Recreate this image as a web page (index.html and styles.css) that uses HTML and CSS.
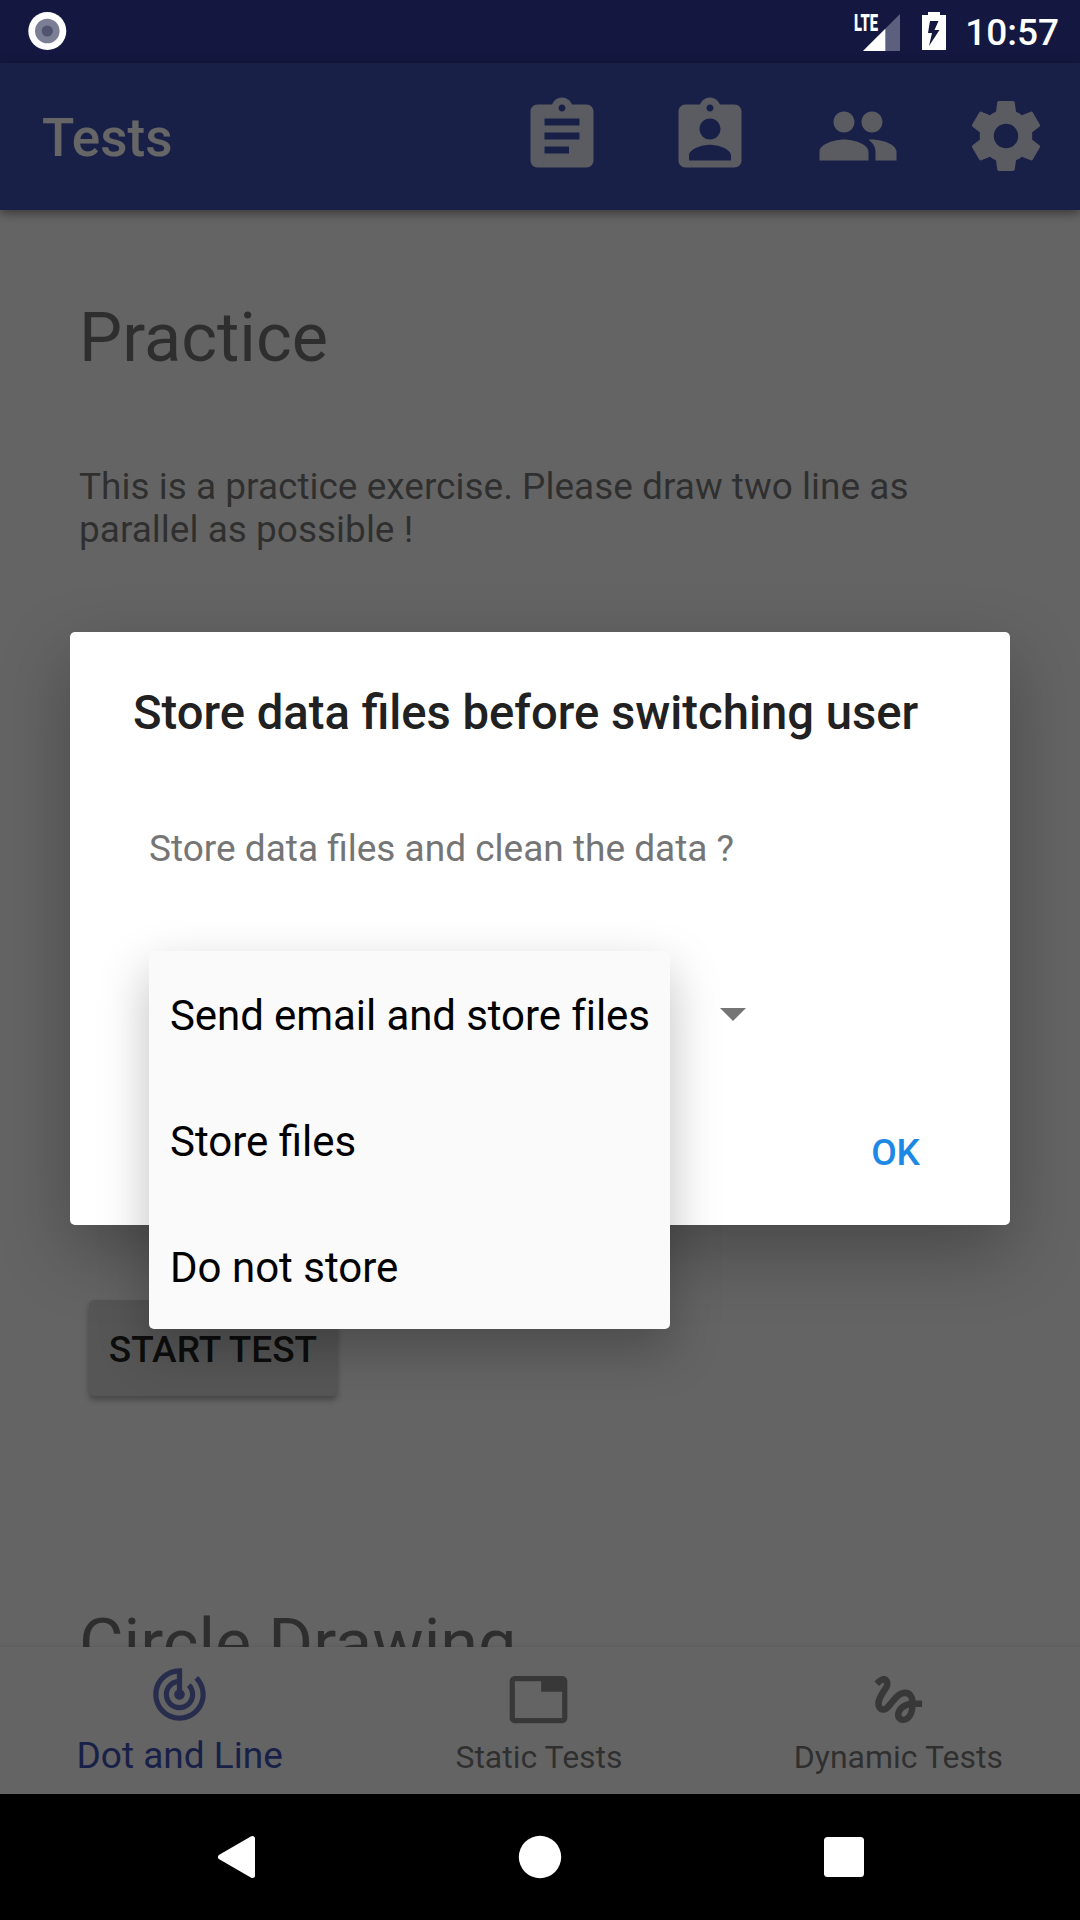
FILE: index.html
```html
<!DOCTYPE html>
<html lang="en">
<head>
<meta charset="utf-8">
<title>Tests</title>
<link rel="stylesheet" href="styles.css">
</head>
<body>
<div class="screen">
  <header class="status-bar">
    <svg class="status-record" width="40" height="40" viewBox="0 0 40 40"><circle cx="20.300" cy="20" r="19" fill="#fff"/><circle cx="20.300" cy="20" r="12.3" fill="#7c7e96"/><circle cx="20.300" cy="20" r="5.6" fill="#51546f"/></svg>
    <div class="status-icons">
      <svg class="signal" width="48" height="40" viewBox="0 0 48 40"><path d="M46 2v37H9z" fill="#5d5f7e"/><path d="M31.3 16.7V39H9z" fill="#fff"/><path d="M0 0h26v18H0z" fill="#141840"/><text x="0" y="18.7" textLength="24" lengthAdjust="spacingAndGlyphs" class="lte">LTE</text></svg>
      <svg class="battery" width="24" height="38" viewBox="0 0 24 38"><path fill="#fff" fill-rule="evenodd" d="M6 0h12v3H24v35H0V3h6zM8 9L6 21h4L7 34l10.500-16H12.500L16.500 9z"/></svg>
      <span class="clock">10:57</span>
    </div>
  </header>

  <div class="app">
    <div class="toolbar">
      <h1 class="toolbar-title">Tests</h1>
      <div class="toolbar-actions">
        <svg class="action" viewBox="0 0 24 24"><path d="M19 3h-4.180C14.400 1.840 13.300 1 12 1c-1.300 0-2.400.84-2.820 2H5c-1.100 0-2 .9-2 2v14c0 1.100.9 2 2 2h14c1.100 0 2-.9 2-2V5c0-1.100-.9-2-2-2zm-7 0c.55 0 1 .45 1 1s-.45 1-1 1-1-.45-1-1 .45-1 1-1zm2 14H7v-2h7v2zm3-4H7v-2h10v2zm0-4H7V7h10v2z"/></svg>
        <svg class="action" viewBox="0 0 24 24"><path d="M19 3h-4.180C14.400 1.840 13.300 1 12 1c-1.300 0-2.400.84-2.820 2H5c-1.100 0-2 .9-2 2v14c0 1.100.9 2 2 2h14c1.100 0 2-.9 2-2V5c0-1.100-.9-2-2-2zm-7 0c.55 0 1 .45 1 1s-.45 1-1 1-1-.45-1-1 .45-1 1-1zm0 4c1.660 0 3 1.340 3 3s-1.340 3-3 3-3-1.340-3-3 1.340-3 3-3zm6 12H6v-1.400c0-2 4-3.100 6-3.100s6 1.100 6 3.100V19z"/></svg>
        <svg class="action" viewBox="0 0 24 24"><path d="M16 11c1.660 0 2.990-1.340 2.990-3S17.660 5 16 5c-1.660 0-3 1.340-3 3s1.340 3 3 3zm-8 0c1.660 0 2.990-1.340 2.990-3S9.660 5 8 5C6.340 5 5 6.340 5 8s1.340 3 3 3zm0 2c-2.330 0-7 1.170-7 3.500V19h14v-2.500c0-2.330-4.670-3.500-7-3.500zm8 0c-.29 0-.62.02-.97.05 1.160.84 1.970 1.970 1.970 3.450V19h6v-2.500c0-2.330-4.670-3.500-7-3.500z"/></svg>
        <svg class="action" viewBox="0 0 24 24"><path d="M19.430 12.980c.04-.32.07-.64.07-.98s-.03-.66-.07-.98l2.110-1.650c.19-.15.24-.42.12-.64l-2-3.460c-.12-.22-.39-.3-.61-.22l-2.490 1c-.52-.4-1.080-.73-1.690-.98l-.38-2.650C14.460 2.180 14.250 2 14 2h-4c-.25 0-.46.18-.49.42l-.38 2.650c-.61.25-1.170.59-1.690.98l-2.490-1c-.23-.09-.49 0-.61.22l-2 3.460c-.13.22-.07.49.12.64l2.110 1.650c-.04.32-.07.65-.07.98s.03.66.07.98l-2.110 1.650c-.19.15-.24.42-.12.64l2 3.460c.12.22.39.3.61.22l2.490-1c.52.4 1.080.73 1.690.98l.38 2.650c.03.24.24.42.49.42h4c.25 0 .46-.18.49-.42l.38-2.650c.61-.25 1.170-.59 1.690-.98l2.490 1c.23.09.49 0 .61-.22l2-3.460c.12-.22.07-.49-.12-.64l-2.110-1.650zM12 15.500c-1.930 0-3.500-1.570-3.500-3.500s1.570-3.500 3.500-3.500 3.500 1.570 3.500 3.500-1.570 3.500-3.500 3.500z"/></svg>
      </div>
    </div>

    <main class="content">
      <h2 class="test-name">Practice</h2>
      <p class="test-text">This is a practice exercise. Please draw two line as parallel as possible !</p>
      <button class="start">START TEST</button>
      <h2 class="test-name">Circle Drawing</h2>
    </main>

    <nav class="tabs">
      <div class="tab tab-active">
        <svg class="tab-icon" viewBox="0 0 24 24"><path d="M19.070 4.930l-1.410 1.410C19.100 7.790 20 9.790 20 12c0 4.420-3.580 8-8 8s-8-3.580-8-8c0-4.080 3.050-7.440 7-7.930v2.020C8.160 6.570 6 9.030 6 12c0 3.310 2.690 6 6 6s6-2.690 6-6c0-1.660-.67-3.160-1.760-4.240l-1.410 1.410C15.550 9.900 16 10.900 16 12c0 2.210-1.790 4-4 4s-4-1.790-4-4c0-1.860 1.280-3.410 3-3.860v2.140c-.6.35-1 .98-1 1.720 0 1.100.9 2 2 2s2-.9 2-2c0-.74-.4-1.380-1-1.720V2h-1C6.480 2 2 6.480 2 12s4.480 10 10 10 10-4.480 10-10c0-2.760-1.120-5.260-2.930-7.070z"/></svg>
        <span class="tab-label">Dot and Line</span>
      </div>
      <div class="tab">
        <svg class="tab-icon" viewBox="0 0 24 24"><path d="M21 3H3c-1.100 0-2 .9-2 2v14c0 1.100.9 2 2 2h18c1.100 0 2-.9 2-2V5c0-1.100-.9-2-2-2zm0 16H3V5h10v4h8v10z"/></svg>
        <span class="tab-label">Static Tests</span>
      </div>
      <div class="tab">
        <svg class="tab-icon" viewBox="0 0 24 24"><path d="M4.590 6.890c.7-.71 1.400-1.350 1.710-1.220.5.2 0 1.030-.3 1.520-.25.42-2.860 3.890-2.860 6.310 0 1.280.48 2.340 1.340 2.980.75.56 1.740.73 2.640.46 1.070-.31 1.950-1.400 3.060-2.770 1.210-1.490 2.830-3.440 4.080-3.440 1.630 0 1.650 1.010 1.760 1.790-3.780.64-5.380 3.670-5.380 5.370 0 1.700 1.440 3.090 3.210 3.090 1.630 0 4.290-1.330 4.690-6.100H21v-2.500h-2.470c-.15-1.650-1.090-4.200-4.030-4.200-2.250 0-4.180 1.910-4.940 2.840-.58.73-2.060 2.480-2.290 2.720-.25.3-.68.84-1.110.84-.45 0-.72-.83-.36-1.920.35-1.090 1.400-2.860 1.850-3.520.78-1.140 1.300-1.920 1.300-3.280C8.950 3.690 7.310 3 6.440 3 5.120 3 3.970 4 3.720 4.250c-.36.36-.66.66-.88.93l1.750 1.710zm9.290 11.660c-.31 0-.74-.26-.74-.72 0-.6.73-2.200 2.870-2.760-.3 2.690-1.430 3.480-2.130 3.480z"/></svg>
        <span class="tab-label">Dynamic Tests</span>
      </div>
    </nav>

    <div class="scrim">
      <section class="dialog">
        <h2 class="dialog-title">Store data files before switching user</h2>
        <p class="dialog-text">Store data files and clean the data ?</p>
        <div class="spinner">
          <svg width="26" height="13" viewBox="0 0 26 13"><path d="M0 0h26L13 13z" fill="#757575"/></svg>
          <ul class="dropdown">
            <li class="option">Send email and store files</li>
            <li class="option">Store files</li>
            <li class="option">Do not store</li>
          </ul>
        </div>
        <div class="dialog-actions"><button class="ok">OK</button></div>
      </section>
    </div>
  </div>

  <footer class="nav-bar">
    <svg width="44" height="44" viewBox="0 0 44 44"><path d="M38.500 3.500v37L6.500 22z" fill="#fff" stroke="#fff" stroke-width="5" stroke-linejoin="round"/></svg>
    <svg width="44" height="44" viewBox="0 0 44 44"><circle cx="22" cy="22" r="21.200" fill="#fff"/></svg>
    <svg width="44" height="44" viewBox="0 0 44 44"><rect x="2" y="2" width="40" height="40" rx="3.500" fill="#fff"/></svg>
  </footer>
</div>
</body>
</html>
```

FILE: styles.css
```css
* { box-sizing: border-box; }

body, h1, h2, p, ul { margin: 0; padding: 0; }

body {
  font-family: Roboto, "Liberation Sans", sans-serif;
  overflow: hidden;
}

svg { display: block; }

button {
  font: inherit;
  border: 0;
  padding: 0;
}

.screen {
  width: 1080px;
  height: 1920px;
  display: flex;
  flex-direction: column;
}

/* System status bar */
.status-bar {
  height: 63px;
  padding: 0 21px 0 27px;
  display: flex;
  justify-content: space-between;
  align-items: center;
  background: #141840;
}

.status-icons {
  display: flex;
  align-items: center;
}

.status-record { margin-bottom: 1px; }

.battery {
  margin: 0 19px 1px 20px;
}

.lte {
  font: 900 23px Roboto, sans-serif;
  fill: #fff;
}

.clock {
  font-size: 37px;
  font-weight: 500;
  line-height: 43px;
  padding-top: 2px;
  color: #fff;
}

/* Application */
.app {
  position: relative;
  height: 1731px;
  display: flex;
  flex-direction: column;
  background: #fafafa;
}

.toolbar {
  height: 147px;
  flex: none;
  display: flex;
  align-items: center;
  justify-content: space-between;
  padding: 0 32px 0 42px;
  background: #3f51b5;
  box-shadow: 0 3px 10px rgba(0, 0, 0, .45);
}

.toolbar-title {
  font-size: 53px;
  font-weight: 500;
  line-height: 62px;
  padding-top: 2px;
  color: #fff;
}

.toolbar-actions {
  display: flex;
  gap: 64px;
  padding-bottom: 2px;
}

.action {
  width: 84px;
  height: 84px;
  fill: #fff;
  opacity: .85;
}

.content {
  flex: 1;
  min-height: 0;
  overflow: hidden;
  padding: 88px 79px 0;
  color: rgba(0, 0, 0, .54);
}

.test-name {
  font-size: 68.4px;
  font-weight: 400;
  line-height: 80px;
}

.test-text {
  margin-top: 87px;
  font-size: 37px;
  line-height: 43px;
}

.start {
  display: block;
  width: 248px;
  height: 96px;
  margin: 749px 0 208px 10px;
  padding-top: 2px;
  border-radius: 5px;
  background: #d6d7d7;
  box-shadow: 0 4px 6px rgba(0, 0, 0, .3);
  font-size: 37px;
  font-weight: 500;
  color: rgba(0, 0, 0, .87);
}

.tabs {
  height: 147px;
  flex: none;
  display: flex;
  padding-right: 2px;
  background: #fafafa;
  box-shadow: 0 0 5px rgba(0, 0, 0, .12);
}

.tab {
  flex: 1;
  display: flex;
  flex-direction: column;
  align-items: center;
  justify-content: flex-end;
  padding-bottom: 18px;
  color: rgba(0, 0, 0, .54);
}

.tab-active {
  padding-bottom: 17px;
  color: #3f51b5;
}

.tab-icon {
  width: 63px;
  height: 63px;
  margin-bottom: 8px;
  fill: #737373;
  opacity: .8;
}

.tab-label {
  font-size: 32px;
  line-height: 37px;
}

.tab-active .tab-icon { fill: #3f51b5; }

.tab-active .tab-label {
  font-size: 37px;
  line-height: 43px;
}

/* Dialog */
.scrim {
  position: absolute;
  inset: 0;
  padding: 569px 70px 0;
  background: rgba(0, 0, 0, .6);
}

.dialog {
  height: 593px;
  padding: 53px 63px 0;
  border-radius: 5px;
  background: #fff;
  box-shadow: 0 26px 70px rgba(0, 0, 0, .28);
}

.dialog-title {
  font-size: 47.2px;
  font-weight: 500;
  line-height: 56px;
  white-space: nowrap;
  color: #212121;
}

.dialog-text {
  margin: 86px 0 0 16px;
  font-size: 37px;
  line-height: 43px;
  color: #757575;
}

.spinner {
  position: relative;
  height: 126px;
  margin: 81px 0 0 16px;
  padding: 57px 0 0 571px;
}

.dropdown {
  position: absolute;
  left: 0;
  top: 0;
  width: 521px;
  border-radius: 5px;
  background: #fafafa;
  box-shadow: 0 20px 50px rgba(0, 0, 0, .25);
  list-style: none;
}

.option {
  height: 126px;
  padding: 2px 0 0 21px;
  font-size: 42px;
  line-height: 126px;
  color: #000;
}

.option:first-child { letter-spacing: -.08px; font-variant-ligatures: common-ligatures; }

.dialog-actions {
  display: flex;
  justify-content: flex-end;
  padding: 54px 27px 0 0;
}

.ok {
  background: none;
  font-size: 37px;
  font-weight: 500;
  line-height: 43px;
  color: #1e88e5;
}

/* System navigation bar */
.nav-bar {
  height: 126px;
  display: flex;
  justify-content: center;
  align-items: center;
  gap: 260px;
  background: #000;
}
```
